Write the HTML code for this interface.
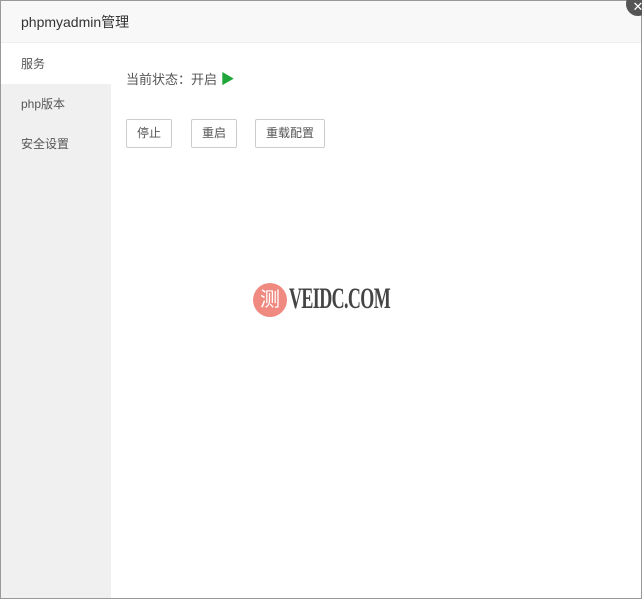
<!DOCTYPE html>
<html><head><meta charset="utf-8"><style>
body{margin:0;width:642px;height:599px;overflow:hidden;background:#fff;font-family:"Liberation Sans","Noto Sans CJK SC",sans-serif;position:relative}
.frame{position:absolute;left:0;top:0;width:640px;height:597px;border:1px solid #999;background:#fff}
.head{position:absolute;left:0;top:0;width:640px;height:42px;background:#f8f8f8;border-bottom:1px solid #eee;font-size:14px;color:#333;line-height:42px;padding-left:20px;box-sizing:border-box}
.side{position:absolute;left:0;top:43px;width:110px;height:554px;background:#f0f0f0}
.side div{height:40px;line-height:40px;padding-left:20px;font-size:12px;color:#555}
.side .on{background:#fff}
.main{position:absolute;left:126px;top:69px;font-size:13px;color:#555}
.btn{position:absolute;top:119px;height:27px;border:1px solid #ccc;border-radius:2px;font-size:12px;color:#555;line-height:27px;text-align:center;background:#fff}
.close{position:absolute;left:626px;top:-8px;width:24px;height:24px;border-radius:50%;background:#555;color:#fff;font-size:13px;text-align:center;line-height:30px}
</style></head><body>
<div class="frame">
<div class="head">phpmyadmin管理</div>
<div class="side"><div class="on">服务</div><div>php版本</div><div>安全设置</div></div>
</div>
<div class="main">当前状态：开启 <span style="color:#20a53a;font-size:14px">▶</span></div>
<div class="btn" style="left:126px;width:44px">停止</div>
<div class="btn" style="left:191px;width:44px">重启</div>
<div class="btn" style="left:255px;width:68px">重载配置</div>
<div style="position:absolute;left:253px;top:283px;width:34px;height:34px;border-radius:50%;background:#f08a80;color:#fff;font-size:20px;text-align:center;line-height:34px">测</div>
<div style="position:absolute;left:289px;top:282px;font-family:'Liberation Serif',serif;font-weight:bold;font-size:30px;color:#444;letter-spacing:-1px;transform:scaleX(0.6);transform-origin:left">VEIDC.COM</div>
<div class="close">✕</div>
</body></html>
